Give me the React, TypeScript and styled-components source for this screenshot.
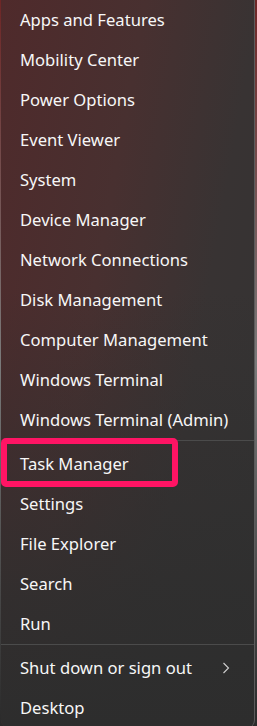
import React from "react";
import styled, { createGlobalStyle } from "styled-components";

const Global = createGlobalStyle`
  html, body {
    margin: 0;
    padding: 0;
    background: #7d7777;
    overflow: hidden;
  }
  body {
    font-family: "Noto Sans", "Open Sans", sans-serif;
  }
`;

const Page = styled.div`
  width: 257px;
  height: 726px;
  overflow: hidden;
  background: linear-gradient(to bottom, #6e2626 0%, #7a7a7a 50%, #2a2a2a 100%);
`;

const Menu = styled.nav`
  margin-left: 1px;
  width: 254px;
  height: 728px;
  border-radius: 0 0 8px 8px;
  border-right: 1px solid #5c5c5c;
  box-sizing: border-box;
  background:
    linear-gradient(to bottom, rgba(46, 46, 46, 0) 40%, rgba(46, 46, 46, 0.85) 82%, #2d2d2d 100%),
    linear-gradient(100deg, #4f2a2b 0%, #483030 38%, #383333 68%, #333333 100%);
  display: flex;
  flex-direction: column;
  overflow: hidden;
`;

const Group = styled.ul`
  list-style: none;
  margin: 0;
  padding: 0;
  display: flex;
  flex-direction: column;
`;

const Item = styled.li`
  position: relative;
  height: 40px;
  display: flex;
  align-items: center;
  justify-content: space-between;
  padding: 0 24px 0 19px;
  color: #f7f7f7;
  font-size: 16.6px;
  line-height: 1;
  white-space: nowrap;
`;

const Label = styled.span`
  display: block;
`;

const Separator = styled.li`
  list-style: none;
  height: 1px;
  background: #4b4b4b;
  margin: 0 0 3px;
`;

const Highlight = styled.span`
  position: absolute;
  top: -6px;
  bottom: -3px;
  left: 0;
  width: 177px;
  box-sizing: border-box;
  border: 6px solid #ff1464;
  border-radius: 5px;
  pointer-events: none;
`;

const Chevron = () => (
  <svg width="8" height="12" viewBox="0 0 8 12" fill="none">
    <path d="M1.5 1 L6.5 6 L1.5 11" stroke="#cfcfcf" strokeWidth="1.1" />
  </svg>
);

const groupA = [
  "Apps and Features",
  "Mobility Center",
  "Power Options",
  "Event Viewer",
  "System",
  "Device Manager",
  "Network Connections",
  "Disk Management",
  "Computer Management",
  "Windows Terminal",
  "Windows Terminal (Admin)",
];

const groupB = ["Task Manager", "Settings", "File Explorer", "Search", "Run"];

export default function App() {
  return (
    <Page>
      <Global />
      <Menu>
        <Group>
          {groupA.map((t) => (
            <Item key={t}>
              <Label>{t}</Label>
            </Item>
          ))}
          <Separator />
          {groupB.map((t) => (
            <Item key={t}>
              <Label>{t}</Label>
              {t === "Task Manager" && <Highlight />}
            </Item>
          ))}
          <Separator />
          <Item>
            <Label>Shut down or sign out</Label>
            <Chevron />
          </Item>
          <Item>
            <Label>Desktop</Label>
          </Item>
        </Group>
      </Menu>
    </Page>
  );
}
